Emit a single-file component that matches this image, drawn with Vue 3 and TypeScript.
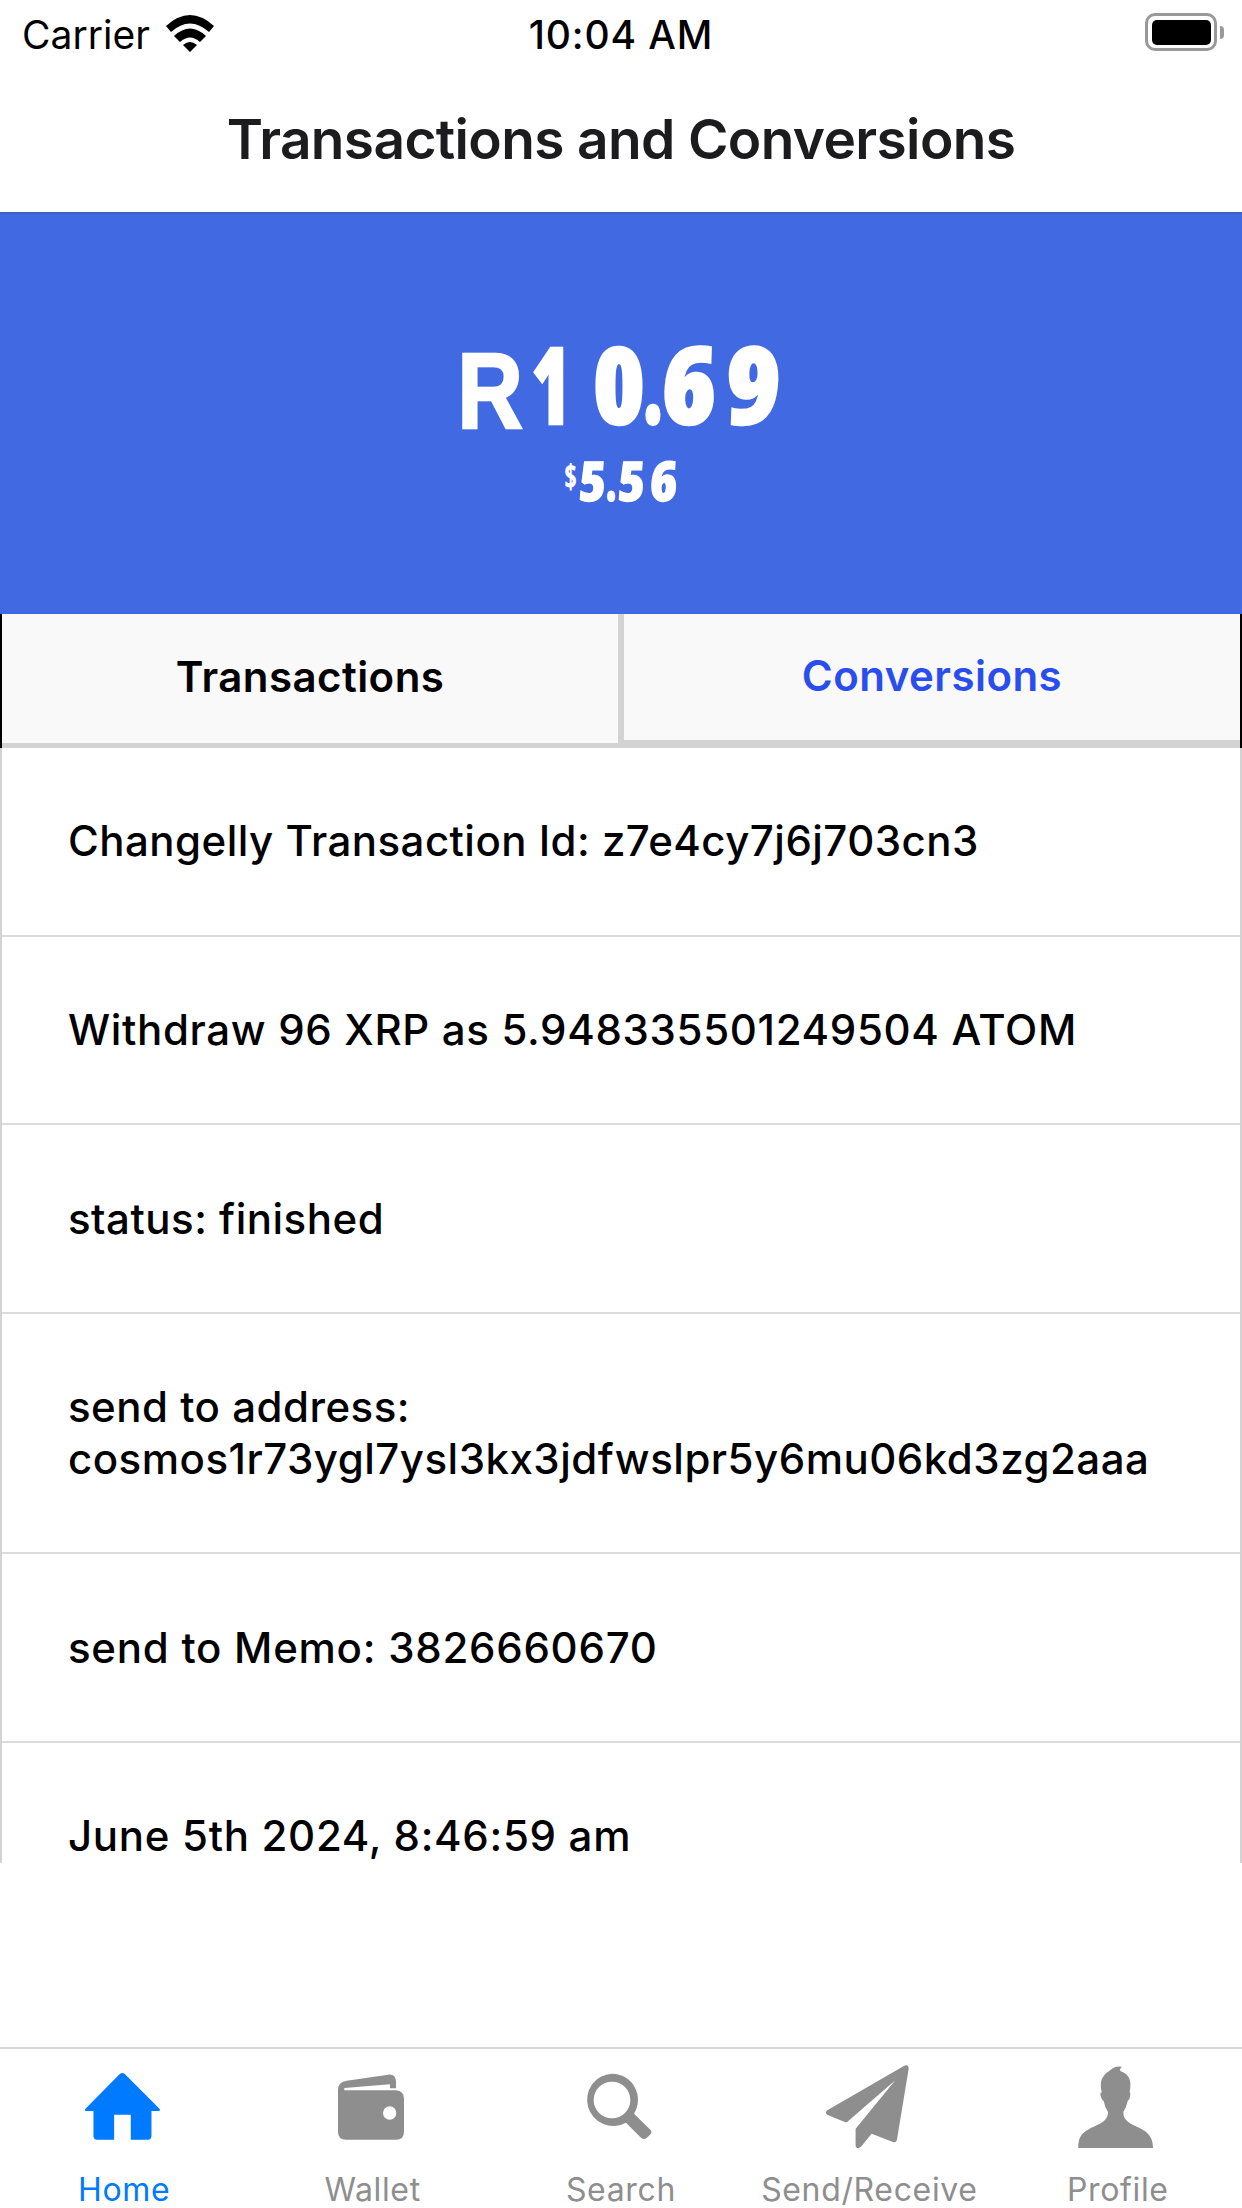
<script setup lang="ts">
import { ref } from 'vue'

interface Row { lines: string[]; tracking: number }
interface Tab { label: string; box: string; path: string }

const rows: Row[] = [
  { lines: ['Changelly Transaction Id: z7e4cy7j6j703cn3'], tracking: 0.47 },
  { lines: ['Withdraw 96 XRP as 5.948335501249504 ATOM'], tracking: 0.67 },
  { lines: ['status: finished'], tracking: 0.5 },
  { lines: ['send to address:', 'cosmos1r73ygl7ysl3kx3jdfwslpr5y6mu06kd3zg2aaa'], tracking: 0.5 },
  { lines: ['send to Memo: 3826660670'], tracking: 0.74 },
  { lines: ['June 5th 2024, 8:46:59 am'], tracking: 0.69 },
]
const tabs: Tab[] = [
  { label: 'Home', box: '237.6 90 270 270', path: 'M360 132Q367.500 126 375 132L479 236Q483 242 477 243H455V318Q455 329 444 329H393V254H343V329H292Q281 329 281 318V243H259Q253 241 257 236Z' },
  { label: 'Wallet', box: '984 90 270 270', path: 'M1038 181H1188Q1212 183 1212 206V305Q1212 329 1188 329H1038Q1014 329 1014 305V178Q1015 155 1040 152L1165 134Q1187 132 1188 154V175H1170V163L1033 174V181ZM1169 229A20 20 0 1 0 1169 269A20 20 0 1 0 1169 229Z' },
  { label: 'Search', box: '230 90 270 270', path: 'M338 131A78.500 78.500 0 1 0 380 278L425 323Q433 331 442 324L452 314Q460 307 453 299L404 251A78.500 78.500 0 0 0 338 131ZM338 155A55 55 0 1 1 338 265A55 55 0 1 1 338 155Z' },
  { label: 'Send/Receive', box: '973.2 89 270 270', path: 'M1214 106Q1228 101 1227 117L1192 328Q1190 338 1180 335L1116 310L1086 347Q1080 355 1073 353Q1068 351 1068 346V295L1187 150L1046 272Q1041 278 1034 274L984 254Q974 248 983 240Z' },
  { label: 'Profile', box: '281 90 270 270', path: 'M297 354C297 315 311 305 352 286C375 276 386 265 386 246Q376 230 373 213Q364 207 363 190Q366 188 367 185C358 142 377 132 398 116Q410 107 428 110Q419 117 424 124C449 133 458 150 451 186Q455 190 452 198Q452 209 445 213Q442 230 432 246C432 264 439 273 463 286C500 302 521 315 521 354Z' },
]
const active = ref('Home')
</script>

<template>
  <main class="screen">
    <header>
      <div class="status">
        <div class="carrier"><span>Carrier</span>
          <svg width="50" height="38" viewBox="0 0 50 38"><path d="M1 12Q25-10 49 12L44 18Q25 1 6 18ZM9 22Q25 7 41 22L35 28Q25 19 15 28ZM18 31Q25 25 32 31L25 38Z" /></svg>
        </div>
        <span class="time">10:04 AM</span>
        <div class="power"><i class="battery"><b></b></i><i class="tip"></i></div>
      </div>
      <h1>Transactions and Conversions</h1>
    </header>
    <section class="balance">
      <div class="amount"><span class="r">R</span><span class="one">1</span><span class="zero">0</span><span class="dot">.</span><span class="six">6</span><span class="nine">9</span></div>
      <div class="fiat"><span class="usd">$</span><span class="whole">5</span><span class="point">.</span><span class="tenth">5</span><span class="cent">6</span></div>
    </section>
    <nav class="switch">
      <button class="tx">Transactions</button>
      <button class="cv">Conversions</button>
    </nav>
    <section class="list">
      <div v-for="(row, i) in rows" :key="i" class="row" :style="{ letterSpacing: row.tracking + 'px' }">
        <div v-for="line in row.lines" :key="line">{{ line }}</div>
      </div>
    </section>
    <nav class="bar">
      <a v-for="tab in tabs" :key="tab.label" :class="{ active: tab.label === active }" @click="active = tab.label">
        <svg width="90" height="90" :viewBox="tab.box"><path :d="tab.path" fill-rule="evenodd" /></svg>
        <span>{{ tab.label }}</span>
      </a>
    </nav>
  </main>
</template>

<style>
body { margin: 0; background: #fff; }
</style>

<style scoped>
* { box-sizing: border-box; }
.screen { width: 1242px; height: 2208px; display: flex; flex-direction: column; overflow: hidden; background: #fff; color: #000; font-family: Inter, "Liberation Sans", sans-serif; }
header { height: 214px; flex: none; border-bottom: 2px solid #4060c4; }
.status { height: 68px; line-height: 69px; display: grid; grid-template-columns: 1fr auto 1fr; font-size: 39px; padding: 0 18px 0 22px; }
.carrier { display: flex; }
.carrier svg { margin: 14px 0 0 15px; }
.time { font-weight: 500; letter-spacing: 0.85px; margin-left: -4px; }
.power { display: flex; justify-content: flex-end; padding-top: 13px; }
.battery { width: 72px; height: 38px; border: 3px solid #999; border-radius: 10px; padding: 3.5px; }
.battery b { display: block; height: 25px; border-radius: 5px; background: #000; }
.tip { width: 4px; height: 13px; margin: 13px 0 0 3px; border-radius: 0 4px 4px 0; background: #999; }
h1 { margin: 38px 0 0; text-align: center; font-size: 55px; line-height: 66px; font-weight: 600; letter-spacing: -0.63px; color: #1c1c1e; white-space: nowrap; }

.balance { height: 400px; flex: none; background: #4169e1; color: #fff; font-family: "Open Sans", "Noto Sans", sans-serif; font-weight: 800; font-stretch: 75%; }
.amount, .fiat { display: flex; }
.amount { padding: 114px 0 0 455px; height: 226px; font-size: 107px; line-height: 110px; -webkit-text-stroke: 2.5px #fff; }
.amount span, .fiat span { display: flex; justify-content: center; flex: none; }
.r { font-family: "Liberation Sans", sans-serif; width: 70px; padding-top: 8px; transform: scaleX(0.85); }
.one { width: 39px; margin-left: 6px; transform: scaleX(0.72); }
.zero { width: 52px; margin-left: 23px; transform: scaleX(0.98); }
.dot { width: 16px; transform: scaleX(0.68); }
.six { width: 53px; margin-left: 2px; transform: scaleX(1.02) skewX(-2deg); }
.nine { width: 53px; margin-left: 11px; transform: scaleX(1.02) skewX(-2deg); }
.fiat { padding-left: 564px; font-size: 55px; line-height: 80px; -webkit-text-stroke: 1.2px #fff; }
.fiat .usd { font-size: 33px; line-height: 73px; width: 13px; transform: scaleX(0.8); -webkit-text-stroke: 0; }
.whole { width: 27px; margin-left: 2px; transform: skewX(-4deg); }
.point { width: 10px; transform: scaleX(0.7); }
.tenth { width: 27px; margin-left: 2px; transform: skewX(-4deg); }
.cent { width: 28px; margin-left: 5px; transform: skewX(-3deg); }

.switch { display: flex; height: 134px; flex: none; border: solid #000; border-width: 0 2px; }
.switch button { flex: 1; border: 0 solid #d3d3d3; background: #f9f9f9; font: 600 42px/50px Inter, sans-serif; letter-spacing: 0.45px; padding: 0 0 3px; }
.switch .tx { color: #000; border-right-width: 3px; border-bottom-width: 5px; }
.switch .cv { border-left-width: 3px; border-bottom-width: 8px; color: #2a4eed; }

.list { height: 1115px; flex: none; overflow: hidden; border: solid #d3d3d3; border-width: 0 2px; }
.row { padding: 67.3px 0 67.9px 66px; border-bottom: 2px solid #dcdcdc; font-size: 42px; line-height: 51.5px; font-weight: 500; white-space: nowrap; }

.bar { height: 161px; margin-top: auto; flex: none; border-top: 2px solid #d8d8d8; display: grid; grid-template-columns: repeat(5, 1fr); }
.bar a { display: flex; flex-direction: column; align-items: center; padding-top: 11px; color: #8e8e8f; font-size: 32px; line-height: 40px; letter-spacing: 0.65px; }
.bar svg { fill: currentColor; margin-bottom: 20px; flex: none; }
.bar .active { color: #007aff; }
</style>
